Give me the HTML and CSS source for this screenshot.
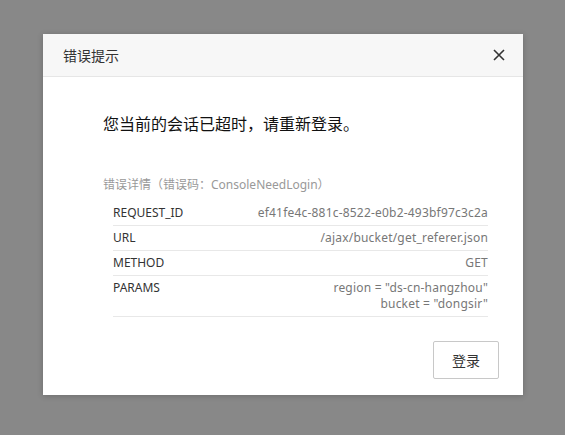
FILE: index.html
```html
<!DOCTYPE html>
<html lang="zh-CN">
<head>
<meta charset="utf-8">
<link rel="stylesheet" href="styles.css">
</head>
<body>
<div class="dialog">
  <div class="dialog-header">
    <span class="dialog-title">错误提示</span>
    <span class="close" aria-label="关闭">
      <svg width="12" height="12" viewBox="0 0 12 12"><path d="M1 1L11 11M11 1L1 11" stroke="#333" stroke-width="1.6" fill="none"/></svg>
    </span>
  </div>
  <div class="dialog-body">
    <p class="message">您当前的会话已超时，请重新登录。</p>
    <p class="detail-label">错误详情（错误码：ConsoleNeedLogin）</p>
    <div class="detail-table">
      <div class="row"><span class="key">REQUEST_ID</span><span class="val">ef41fe4c-881c-8522-e0b2-493bf97c3c2a</span></div>
      <div class="row"><span class="key">URL</span><span class="val">/ajax/bucket/get_referer.json</span></div>
      <div class="row"><span class="key">METHOD</span><span class="val">GET</span></div>
      <div class="row"><span class="key">PARAMS</span><span class="val">region = "ds-cn-hangzhou"<br>bucket = "dongsir"</span></div>
    </div>
  </div>
  <div class="dialog-footer">
    <button class="btn">登录</button>
  </div>
</div>
</body>
</html>
```
FILE: styles.css
```css
html, body {
  margin: 0;
  padding: 0;
}
body {
  background: #888888;
  width: 565px;
  height: 435px;
  overflow: hidden;
  font-family: "Noto Sans", "Noto Sans CJK SC", sans-serif;
  color: #333;
}
.dialog {
  width: 480px;
  height: 361px;
  margin: 34px 0 0 43px;
  background: #fff;
  box-shadow: 0 1px 6px rgba(0,0,0,0.2);
  display: flex;
  flex-direction: column;
}
.dialog-header {
  height: 42px;
  background: #f7f7f7;
  border-bottom: 1px solid #e6e6e6;
  display: flex;
  align-items: center;
  justify-content: space-between;
  padding: 0 18px 0 20px;
}
.dialog-title {
  font-size: 14px;
  color: #333;
  font-family: "Noto Sans CJK SC", sans-serif;
}
.close {
  display: flex;
  width: 12px;
  height: 12px;
}
.dialog-body {
  padding: 34px 35px 0 60px;
  flex: 1;
}
.message {
  margin: 0;
  font-size: 16px;
  line-height: 24px;
  color: #111;
  font-family: "Noto Sans CJK SC", sans-serif;
}
.detail-label {
  margin: 41px 0 0;
  font-size: 12px;
  line-height: 18px;
  color: #999;
}
.detail-table {
  margin: 7px 0 0 10px;
}
.row {
  display: flex;
  justify-content: space-between;
  align-items: flex-start;
  font-size: 12px;
  line-height: 16px;
  padding: 4px 0;
  border-bottom: 1px solid #e8e8e8;
}
.key {
  color: #333;
}
.val {
  color: #777;
  text-align: right;
  letter-spacing: 0.2px;
}
.dialog-footer {
  display: flex;
  justify-content: flex-end;
  padding: 0 24px 16px 0;
}
.btn {
  width: 66px;
  height: 38px;
  background: #fff;
  border: 1px solid #c8c8c8;
  border-radius: 2px;
  font-size: 14px;
  color: #333;
  font-family: "Noto Sans CJK SC", sans-serif;
  padding: 0;
}
```
